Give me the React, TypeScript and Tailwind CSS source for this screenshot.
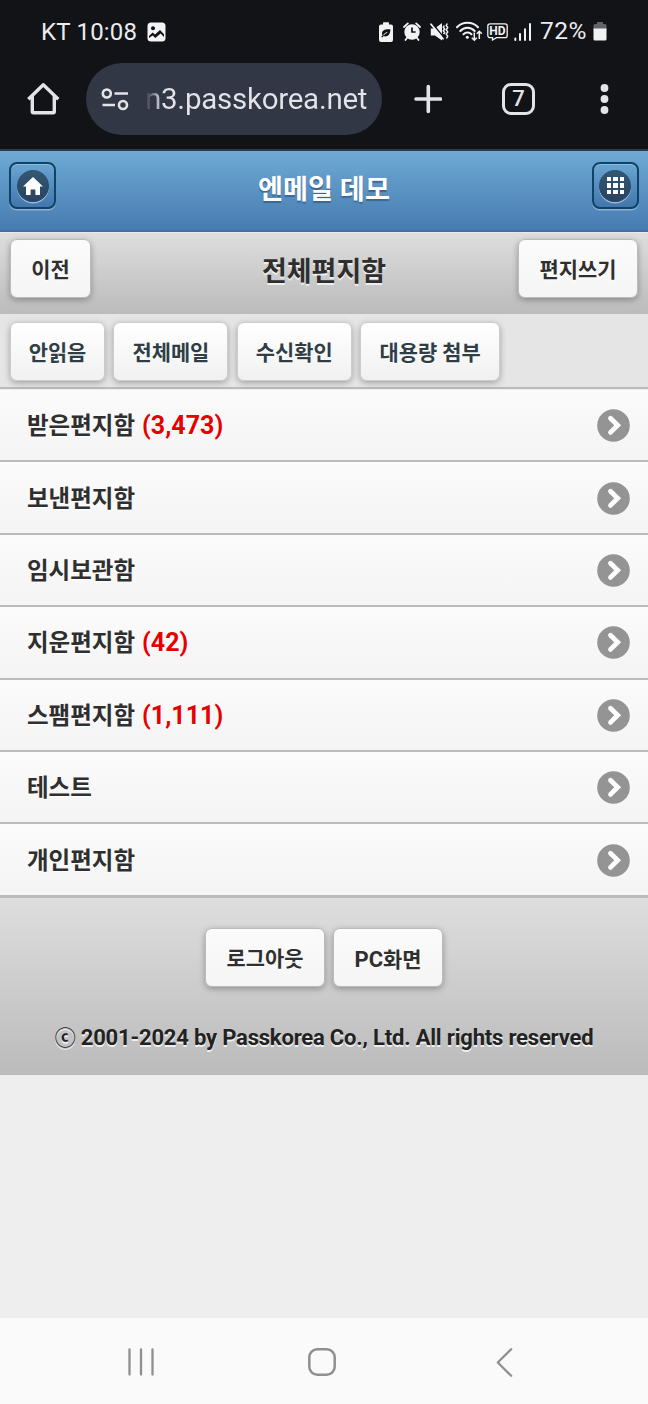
import React from 'react';

interface MailBox {
  name: string;
  count?: string;
}

const mailBoxes: MailBox[] = [
  { name: '받은편지함', count: '(3,473)' },
  { name: '보낸편지함' },
  { name: '임시보관함' },
  { name: '지운편지함', count: '(42)' },
  { name: '스팸편지함', count: '(1,111)' },
  { name: '테스트' },
  { name: '개인편지함' },
];

const filters = [
  { label: '안읽음', width: 'w-[95px]' },
  { label: '전체메일', width: 'w-[115px]' },
  { label: '수신확인', width: 'w-[115px]' },
  { label: '대용량 첨부', width: 'w-[140px]' },
];

function StatusBar() {
  return (
    <div className="flex h-[63px] items-center pl-[41px] pr-[41px] text-[#ececee]">
      <span className="w-[97px] whitespace-nowrap text-[24px] leading-none tracking-[0.2px]">KT 10:08</span>
      <svg className="ml-[9px]" width="19" height="20" viewBox="0 0 19 20">
        <rect x="0.5" y="0.5" width="18" height="19" rx="3.5" fill="#f4f4f4" />
        <circle cx="6" cy="6.3" r="2" fill="#121317" />
        <path d="M2 14l3.600-3.600 2.400 2.200 5-4.600 4 4.200v2.800L13.600 11.500l-5.200 4.500-2.800-2.600L2 16z" fill="#121317" />
      </svg>

      <div className="ml-auto flex items-center">
        {/* power saving */}
        <svg width="14" height="20" viewBox="0 0 14 20">
          <path d="M4 2.500V1.200C4 .6 4.400.2 5 .2h4c.6 0 1 .4 1 1v1.300h2a2 2 0 0 1 2 2V18a2 2 0 0 1-2 2H2a2 2 0 0 1-2-2V4.500a2 2 0 0 1 2-2z" fill="#f2f2f2" />
          <path d="M11.500 7.500c-5-.6-8.500.8-8.500 4 0 .8.200 1.300.6 1.800l-1.400 1.500 1 .7 1.400-1.400c3.500 1.200 6.500-1 6.900-6.600z" fill="#121317" />
          <path d="M4.300 13.300c1.200-1.500 2.300-2.300 4-3" stroke="#f2f2f2" fill="none" />
        </svg>
        {/* alarm */}
        <svg className="ml-[10px]" width="18" height="19" viewBox="0 0 18 19">
          <circle cx="9" cy="10" r="7.700" fill="#f2f2f2" />
          <path d="M1 5l3.800-3.600M17 5l-3.800-3.600M4.300 15.500L2.500 18M13.700 15.500l1.800 2.500" stroke="#f2f2f2" strokeWidth="1.800" strokeLinecap="round" />
          <path d="M9 5.500V10h3.600" stroke="#121317" strokeWidth="1.700" fill="none" />
        </svg>
        {/* mute / vibrate */}
        <svg className="ml-[9px]" width="19" height="20" viewBox="0 0 19 20">
          <path d="M.8 6.500h4L12 1v17.500l-7-5H.8z" fill="#f2f2f2" />
          <path d="M2 1l12 14.800" stroke="#121317" strokeWidth="1.500" />
          <path d="M1 2.200l12 14.600" stroke="#f2f2f2" strokeWidth="1.800" strokeLinecap="round" />
          <path d="M14.300 3.500l-1 1.800 1.300 1.700-1.300 1.800 1.300 1.700-1 1.700M17.300 1.500l-1.100 2 1.500 2.100-1.500 2.100 1.500 2.200-1.500 2.100 1.500 2.200-1.200 2.300" stroke="#f2f2f2" strokeWidth="1.500" fill="none" />
        </svg>
        {/* wifi */}
        <svg className="ml-[7px]" width="27" height="21" viewBox="0 0 27 21">
          <path d="M1 6.300C6.500.3 16.500.3 22 6.300" stroke="#f2f2f2" strokeWidth="2" fill="none" strokeLinecap="round" />
          <path d="M4.300 10c4-4.300 10.400-4.300 14.400 0" stroke="#f2f2f2" strokeWidth="2" fill="none" strokeLinecap="round" />
          <path d="M7.500 13.300c2.300-2.300 5.700-2.300 8 0" stroke="#f2f2f2" strokeWidth="2" fill="none" strokeLinecap="round" />
          <circle cx="11.300" cy="16.300" r="1.500" fill="#f2f2f2" />
          <path d="M18.300 11.500V19m-2.500-2.300l2.500 2.500 2.500-2.500M23.300 18v-7.500m-2.500 2.300l2.500-2.500 2.500 2.500" stroke="#f2f2f2" strokeWidth="1.500" fill="none" />
        </svg>
        {/* HD voice */}
        <svg className="ml-[4px]" width="21" height="18" viewBox="0 0 21 18">
          <path d="M3 .8h15a2.200 2.200 0 0 1 2.200 2.200v9.500a2.200 2.200 0 0 1-2.200 2.200H9.500L5.500 17v-2.300H3a2.200 2.200 0 0 1-2.200-2.200V3A2.200 2.200 0 0 1 3 .8z" stroke="#f2f2f2" strokeWidth="1.300" fill="none" />
          <text x="10.500" y="12" fontSize="12" fontWeight="700" textAnchor="middle" fill="#f2f2f2">HD</text>
        </svg>
        {/* signal */}
        <svg className="ml-[6px]" width="18" height="18" viewBox="0 0 18 18">
          <path d="M1.300 15.500V17M6 11V17M11 6.300V17M16 1V17" stroke="#f2f2f2" strokeWidth="2" strokeLinecap="round" />
        </svg>
        <span className="ml-[8px] w-[49px] whitespace-nowrap text-[24.500px] leading-none tracking-[0.5px]">72%</span>
        <svg className="ml-[4px]" width="14" height="19" viewBox="0 0 14 19">
          <path d="M4 2V0h6v2h2a1.500 1.500 0 0 1 1.500 1.500V8H.5V3.500A1.500 1.500 0 0 1 2 2z" fill="#636366" />
          <path d="M.5 6.500h13V17a1.500 1.500 0 0 1-1.500 1.500H2A1.500 1.500 0 0 1 .5 17z" fill="#f2f2f2" />
        </svg>
      </div>
    </div>
  );
}

function BrowserBar() {
  return (
    <div className="flex h-[72px] items-center">
      <svg className="ml-[27px]" width="33" height="34" viewBox="0 0 33 34" fill="none" stroke="#e4e3ea" strokeWidth="3.400">
        <path d="M1.300 17.200L16.300 2.800l15 14.400" strokeLinejoin="round" />
        <path d="M5.300 14v15.500a1.200 1.200 0 0 0 1.200 1.200h19.600a1.200 1.200 0 0 0 1.200-1.200V14" />
      </svg>
      <div className="ml-[26px] flex h-[72px] w-[296px] items-center rounded-full bg-[#323745] pl-[15px]">
        <svg width="28" height="24" viewBox="0 0 28 24" fill="none" stroke="#e4e3ea" strokeWidth="2.600">
          <circle cx="5.800" cy="6.500" r="4" />
          <path d="M13.500 6.500H27M1.500 18h12.500" />
          <circle cx="22" cy="18" r="4" />
        </svg>
        <span className="ml-[16px] whitespace-nowrap bg-linear-to-r from-[#323745] to-[#e4e3ea] to-[17px] bg-clip-text text-[29.5px] leading-[40px] tracking-[-0.25px] text-transparent">
          n3.passkorea.net
        </span>
      </div>
      <svg className="ml-[32px]" width="28" height="30" viewBox="0 0 28 30" stroke="#e4e3ea" strokeWidth="3.600" strokeLinecap="round">
        <path d="M2 15h24.500M14.300 2.500v25" />
      </svg>
      <div className="ml-[60px] flex h-[32px] w-[33px] items-center justify-center rounded-[9px] border-[3.500px] border-[#e4e3ea] text-[22px] font-medium leading-none text-[#e4e3ea]">
        7
      </div>
      <svg className="ml-[65px]" width="9" height="30" viewBox="0 0 9 30" fill="#e4e3ea">
        <circle cx="4.500" cy="4" r="3.900" />
        <circle cx="4.500" cy="15" r="3.900" />
        <circle cx="4.500" cy="26" r="3.900" />
      </svg>
    </div>
  );
}

function HeaderButton({ children }: { children: React.ReactNode }) {
  return (
    <button className="flex h-[47px] w-[47px] items-center justify-center rounded-[8px] border-2 border-[#0f4469] bg-linear-to-b from-[#6aa6d2] to-[#4276ad] shadow-[0_1.5px_0_rgba(255,255,255,0.35),inset_0_1px_0_rgba(255,255,255,0.25)]">
      <span className="flex h-8 w-8 items-center justify-center rounded-full bg-linear-to-b from-[#335872] to-[#284362] shadow-[0_1.5px_0_rgba(255,255,255,0.45)]">
        {children}
      </span>
    </button>
  );
}

function GrayButton({ label, width }: { label: React.ReactNode; width: string }) {
  return (
    <button className={`${width} h-[59px] shrink-0 whitespace-nowrap rounded-[7px] border-[1.5px] border-[#bbb] bg-linear-to-b from-[#fbfbfb] to-[#f5f5f5] pt-[5px] text-[20.9px] font-bold text-[#2f2f2f] shadow-[0_2px_6px_rgba(0,0,0,0.3)] [text-shadow:0_1px_0_#fff]`}>
      {label}
    </button>
  );
}

function FilterButton({ label, width }: { label: string; width: string }) {
  return (
    <button className={`${width} h-[59px] shrink-0 whitespace-nowrap rounded-[7px] border-[1.5px] border-[#ccc] bg-linear-to-b from-white to-[#f1f1f1] pt-[5px] text-[20.9px] font-bold text-[#2f3e46] shadow-[0_2px_6px_rgba(0,0,0,0.3)] [text-shadow:0_1px_0_#fff]`}>
      {label}
    </button>
  );
}

function MailBoxRow({ box }: { box: MailBox }) {
  return (
    <li className="flex h-[72.4px] items-center justify-between border-b-2 border-[#bbb] bg-linear-to-b from-[#fbfbfb] to-[#f4f4f4] pl-[27px] pr-[18px]">
      <span className="flex items-center pt-[2px] text-[23.5px] font-bold leading-[30px] text-[#2f2f2f] [text-shadow:0_1px_0_#fff]">
        {box.name}
        {box.count && <span className="ml-[7px] text-[25px] text-[#e60000]">{box.count}</span>}
      </span>
      <svg className="mt-px" width="33" height="33" viewBox="0 0 33 33">
        <circle cx="16.500" cy="16.500" r="16.300" fill="#949494" />
        <path d="M13.500 9.200l7.200 7.100-7.200 7.100" fill="none" stroke="#fff" strokeWidth="4.800" strokeLinecap="round" />
      </svg>
    </li>
  );
}

export default function App() {
  return (
    <div className="flex h-[1404px] w-[648px] flex-col overflow-hidden bg-[#eee] font-['Roboto','Noto_Sans_CJK_KR',sans-serif]">
      <div className="h-[151px] shrink-0 border-b-2 border-[#333a47] bg-[#121317]">
        <StatusBar />
        <BrowserBar />
      </div>

      <header className="flex h-[81px] shrink-0 items-start justify-between border-b-2 border-[#456f9e] bg-linear-to-b from-[#6eaad5] to-[#477bb1] px-[9px] pt-[11px]">
        <HeaderButton>
          <svg width="20" height="18" viewBox="0 0 20 18" fill="#fff">
            <path d="M10 0l10 9.500h-3V18h-4.600v-5.500H7.600V18H3V9.500H0z" />
          </svg>
        </HeaderButton>
        <h1 className="mt-[8px] text-[27.2px] font-bold leading-[40px] text-white [text-shadow:0_2px_1px_#3e6790]">엔메일 데모</h1>
        <HeaderButton>
          <span className="grid grid-cols-3 gap-[2px]">
            {Array.from({ length: 9 }, (_, i) => (
              <span key={i} className="h-[4.500px] w-[4.500px] bg-white" />
            ))}
          </span>
        </HeaderButton>
      </header>

      <div className="grid h-[82px] shrink-0 grid-cols-[120px_1fr_120px] items-start border-t border-[#e8e8e8] bg-linear-to-b from-[#dedede] to-[#bbb] px-[10px] pt-[6px]">
        <GrayButton label="이전" width="w-[81px]" />
        <h2 className="mt-[13px] text-center text-[27px] font-bold leading-[40px] text-[#2f2f2f] [text-shadow:0_2px_0_#eee]">전체편지함</h2>
        <GrayButton label="편지쓰기" width="w-[120px]" />
      </div>

      <div className="flex h-[75px] shrink-0 items-start gap-[8.400px] border-b-2 border-[#bbb] bg-[#e5e5e5] pl-[10px] pt-[7.500px]">
        {filters.map((f) => (
          <FilterButton key={f.label} label={f.label} width={f.width} />
        ))}
      </div>

      <ul className="shrink-0 pt-px">
        {mailBoxes.map((box) => (
          <MailBoxRow key={box.name} box={box} />
        ))}
      </ul>

      <footer className="flex h-[178px] shrink-0 flex-col items-center border-t border-[#bbb] bg-linear-to-b from-[#dedede] to-[#bbb] pt-[30px]">
        <div className="flex gap-[8px]">
          <GrayButton label="로그아웃" width="w-[120px]" />
          <GrayButton label={<><span className="text-[22px]">PC</span>화면</>} width="w-[110px]" />
        </div>
        <p className="mt-[37px] whitespace-nowrap text-[22px] font-bold leading-[28px] tracking-[-0.19px] text-[#222] [text-shadow:0_2px_0_#eee]">
          <span className="text-[21px]">ⓒ</span> 2001-2024 by Passkorea Co., Ltd. All rights reserved
        </p>
      </footer>

      <nav className="mt-auto flex h-[86px] shrink-0 items-center bg-[#fafafa] pt-[2px] text-[#8f8f8f]">
        <svg className="ml-[127px]" width="28" height="28" viewBox="0 0 28 28" stroke="currentColor" strokeWidth="2.300" strokeLinecap="round">
          <path d="M2.500 1.500v25M14 1.500v25M25.500 1.500v25" />
        </svg>
        <svg className="ml-[153px]" width="28" height="28" viewBox="0 0 28 28" fill="none" stroke="currentColor" strokeWidth="2.500">
          <rect x="1.300" y="1.300" width="25.400" height="25.400" rx="8" />
        </svg>
        <svg className="ml-[160px]" width="17" height="29" viewBox="0 0 17 29" fill="none" stroke="currentColor" strokeWidth="2.300" strokeLinecap="round" strokeLinejoin="round">
          <path d="M15.200 1.300L1.800 14.500l13.400 13.200" />
        </svg>
      </nav>
    </div>
  );
}
